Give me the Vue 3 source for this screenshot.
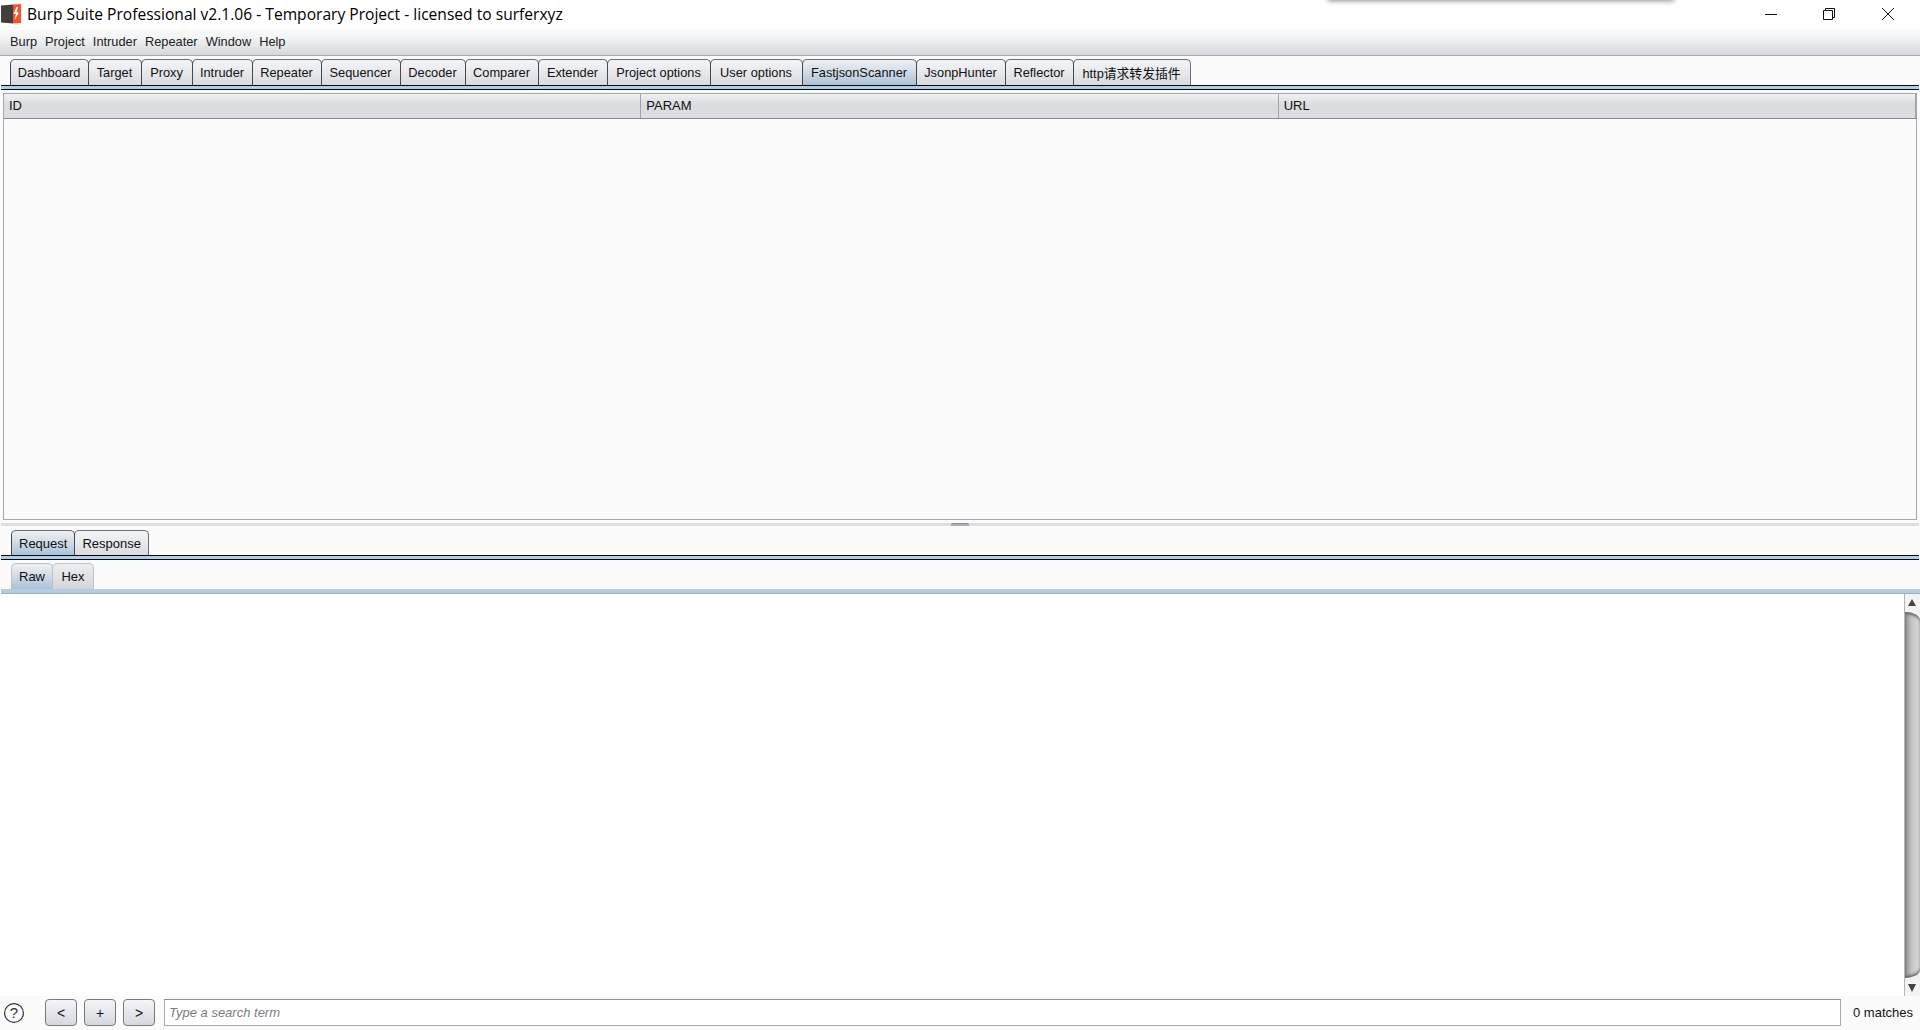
<script setup>
const menus = ['Burp', 'Project', 'Intruder', 'Repeater', 'Window', 'Help']
const tabs = [
  { name: 'Dashboard', width: 79 },
  { name: 'Target', width: 54 },
  { name: 'Proxy', width: 52 },
  { name: 'Intruder', width: 61 },
  { name: 'Repeater', width: 70 },
  { name: 'Sequencer', width: 80 },
  { name: 'Decoder', width: 66 },
  { name: 'Comparer', width: 74 },
  { name: 'Extender', width: 70 },
  { name: 'Project options', width: 104 },
  { name: 'User options', width: 93 },
  { name: 'FastjsonScanner', width: 115 },
  { name: 'JsonpHunter', width: 90 },
  { name: 'Reflector', width: 69 },
  { name: 'http请求转发插件', width: 118 },
]
const columns = ['ID', 'PARAM', 'URL']
</script>

<template>
  <div class="app">
    <div class="window-shadow"></div>
    <header class="titlebar">
      <svg class="logo" width="21" height="20" viewBox="0 0 21 20">
        <path d="M0 1.5 L12 0.5 V19.5 L0 18.5 Z" fill="#404040" />
        <path d="M12 0.5 L20 0 V19 L12 19.5 Z" fill="#f0562a" />
        <path d="M15.5 3 L12.5 10 H15 L13.5 16 L18 8.5 H15.5 L17 3 Z" fill="#fff" />
      </svg>
      <span class="title">Burp Suite Professional v2.1.06 - Temporary Project - licensed to surferxyz</span>
      <div class="win-controls">
        <svg width="14" height="14" viewBox="0 0 14 14"><path d="M0 7.5 H12" stroke="#111" fill="none" /></svg>
        <svg width="14" height="14" viewBox="0 0 14 14"><path d="M0.5 3.5 H9.5 V12.5 H0.5 Z M2.5 3.5 V1.5 H11.5 V10.5 H9.5" stroke="#111" fill="none" /></svg>
        <svg width="14" height="14" viewBox="0 0 14 14"><path d="M1 1 L13 13 M13 1 L1 13" stroke="#111" fill="none" /></svg>
      </div>
    </header>

    <nav class="menubar">
      <span v-for="m in menus" :key="m">{{ m }}</span>
    </nav>

    <div class="tabstrip">
      <div
        v-for="t in tabs"
        :key="t.name"
        class="tab main"
        :class="{ 'is-active': t.name === 'FastjsonScanner' }"
        :style="{ width: `${t.width}px` }"
      >{{ t.name }}</div>
    </div>
    <div class="tab-rule"></div>

    <section class="table">
      <div class="table-head">
        <div v-for="c in columns" :key="c" class="table-col">{{ c }}</div>
      </div>
    </section>

    <div class="splitter"><i></i></div>

    <div class="tabstrip sub">
      <div class="tab is-active">Request</div>
      <div class="tab">Response</div>
    </div>
    <div class="tab-rule"></div>

    <div class="tabstrip inner">
      <div class="tab light is-active">Raw</div>
      <div class="tab light">Hex</div>
    </div>
    <div class="inner-rule"></div>

    <main class="editor">
      <div class="scrollbar">
        <div class="arrow up"></div>
        <div class="thumb"></div>
        <div class="arrow down"></div>
      </div>
    </main>

    <footer class="searchbar">
      <svg class="help" width="22" height="22" viewBox="0 0 22 22">
        <circle cx="11" cy="11" r="9.4" fill="none" stroke="#333" stroke-width="1.2" />
        <text x="11" y="16" text-anchor="middle" class="help-mark">?</text>
      </svg>
      <div class="btns">
        <button type="button">&lt;</button>
        <button type="button">+</button>
        <button type="button">&gt;</button>
      </div>
      <div class="search">Type a search term</div>
      <span class="matches">0 matches</span>
    </footer>
  </div>
</template>

<style scoped>
.app {
  position: relative;
  display: flex;
  flex-direction: column;
  width: 1920px;
  height: 1030px;
  overflow: hidden;
  background: #fbfbfb;
  color: #111;
  font-family: "Liberation Sans", "Noto Sans CJK SC", sans-serif;
  font-size: 13px;
}

.window-shadow {
  position: absolute;
  top: -6px;
  left: 1328px;
  width: 346px;
  height: 6px;
  box-shadow: 0 1px 5px rgba(0, 0, 0, 0.45);
}

.titlebar {
  display: flex;
  align-items: center;
  flex: none;
  height: 29px;
  padding-bottom: 2px;
  background: #fff;
  box-sizing: border-box;
}

.logo {
  flex: none;
  margin-left: 1px;
}

.title {
  margin-left: 5px;
  font-family: "Open Sans", sans-serif;
  font-size: 15.6px;
  color: #000;
}

.win-controls {
  display: flex;
  gap: 44px;
  margin-left: auto;
  margin-right: 25px;
}

.menubar {
  display: flex;
  align-items: center;
  flex: none;
  gap: 8px;
  height: 24px;
  padding: 0 10px 2px;
  border-bottom: 1px solid #a9abb0;
  background: linear-gradient(#fafafa, #f4f5f6 30%, #d5d7db);
  color: #222;
  font-size: 12.8px;
  box-sizing: content-box;
}

.tabstrip {
  display: flex;
  align-items: flex-end;
  flex: none;
  height: 26px;
  margin-top: 3px;
  padding-left: 10px;
}

.tab {
  display: flex;
  align-items: center;
  justify-content: center;
  height: 100%;
  padding: 0 7px;
  border: 1px solid #6a6d73;
  border-bottom: none;
  border-left-color: #44474c;
  border-radius: 5px 5px 0 0;
  background: linear-gradient(#f4f5f7, #d9dbe0);
  box-sizing: border-box;
  white-space: nowrap;
}

.tab.main {
  padding: 0 1px 0 0;
  font-size: 12.8px;
}

.tab + .tab {
  margin-left: -1px;
}

.tab.is-active {
  background: linear-gradient(#eef0f3, #d7dfe8 40%, #a9c2d9);
}

.tab.light {
  min-width: 42px;
  border-color: #bfc1c6;
  background: linear-gradient(#eceef0, #d3d5da);
}

.tab.light.is-active {
  background: linear-gradient(#eef0f3, #d7dfe8 40%, #a9c2d9);
}

.tab-rule {
  flex: none;
  height: 3px;
  margin: 0 1px;
  border-top: 1px solid #000814;
  border-bottom: 1px solid #000814;
  background: #b5cde2;
  box-sizing: content-box;
}

.table {
  flex: none;
  height: 427px;
  margin: 3px 3px 0;
  border: 1px solid #a5a7ab;
  background: #fbfbfb;
  box-sizing: border-box;
}

.table-head {
  display: grid;
  grid-template-columns: repeat(3, 1fr);
  height: 25px;
  border-bottom: 1px solid #85888e;
  background: linear-gradient(#f0f1f3, #d9dbdf 45%, #dcdee2);
  box-sizing: border-box;
}

.table-col {
  display: flex;
  align-items: center;
  padding: 0 0 2px 5px;
  border-right: 1px solid #a0a2a7;
}

.splitter {
  display: flex;
  justify-content: center;
  flex: none;
  height: 3px;
  margin: 3px 1px 0;
  background: #dcdee3;
}

.splitter i {
  width: 18px;
  height: 3px;
  border-top: 1px solid #8a8f97;
  border-radius: 2px 2px 0 0;
  background: #a9b0b9;
  box-sizing: border-box;
}

.tabstrip.sub {
  height: 25px;
  margin-top: 4px;
  padding-left: 11px;
}

.tabstrip.inner {
  margin-top: 3px;
  padding-left: 11px;
}

.inner-rule {
  flex: none;
  height: 4px;
  margin-left: 1px;
  border-bottom: 1px solid #a8aaad;
  background: #b5cde2;
  box-sizing: content-box;
}

.editor {
  position: relative;
  flex: none;
  height: 402px;
  background: #fff;
}

.scrollbar {
  position: absolute;
  top: 0;
  right: 0;
  bottom: 0;
  display: flex;
  flex-direction: column;
  width: 16px;
  border-left: 1px solid #b4b4b4;
  background: #f3f3f4;
  box-sizing: border-box;
}

.arrow {
  position: relative;
  flex: none;
  height: 18px;
}

.arrow::after {
  content: "";
  position: absolute;
  left: 3px;
  border-left: 4px solid transparent;
  border-right: 4px solid transparent;
}

.arrow.up::after {
  top: 5px;
  border-bottom: 7px solid #444;
}

.arrow.down::after {
  top: 6px;
  border-top: 8px solid #444;
}

.thumb {
  flex: 1;
  border-radius: 0 16px 16px 0 / 0 9px 9px 0;
  background: linear-gradient(90deg, #8c8c8c, #c6c6c6 45%, #dadada);
  box-shadow: inset 0 3px 3px -1px #666, inset 0 -3px 3px -1px #666;
}

.searchbar {
  display: flex;
  align-items: center;
  flex: 1;
  padding: 0 0 1px 3px;
  background: #fbfbfb;
}

.help {
  flex: none;
}

.help-mark {
  font-family: "Liberation Sans", sans-serif;
  font-size: 15px;
  fill: #333;
}

.btns {
  display: flex;
  gap: 7px;
  margin-left: 20px;
}

.btns button {
  width: 32px;
  height: 27px;
  padding: 0;
  border: 1px solid #77797e;
  border-radius: 4px;
  background: linear-gradient(#f4f5f7, #d6d8de);
  color: #111;
  font: 14px "Liberation Sans", sans-serif;
}

.search {
  display: flex;
  align-items: center;
  flex: none;
  width: 1677px;
  height: 27px;
  margin-left: 9px;
  padding-left: 4px;
  border: 1px solid #a7a9ac;
  border-top-color: #8c8e91;
  background: #fff;
  color: #7b7d80;
  font-style: italic;
  box-sizing: border-box;
}

.matches {
  margin-left: 12px;
  white-space: nowrap;
}
</style>
